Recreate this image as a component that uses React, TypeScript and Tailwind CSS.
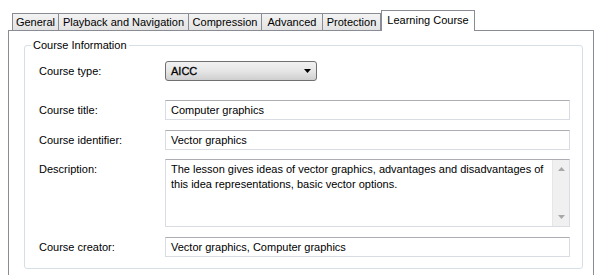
import React from "react";

const tabs = [
  { label: "General", w: "w-[47px]" },
  { label: "Playback and Navigation", w: "w-[131px]" },
  { label: "Compression", w: "w-[74px]" },
  { label: "Advanced", w: "w-[62px]" },
  { label: "Protection", w: "w-[59px]" },
];

function TextField({ value }: { value: string }) {
  return (
    <div className="h-[20px] flex-1 border border-[#dadce3] border-t-[#abadb3] bg-white pl-[5px] leading-[18px] text-black">
      {value}
    </div>
  );
}

function Row({ label, children }: { label: string; children: React.ReactNode }) {
  return (
    <div className="flex items-center">
      <div className="w-[126px] shrink-0">{label}</div>
      {children}
    </div>
  );
}

export default function App() {
  return (
    <div className="w-[605px] h-[275px] overflow-hidden bg-white pt-[10px] font-['Liberation_Sans',Arial,sans-serif] text-[11px] text-black">
      <div className="flex items-end pl-[12px]">
        {tabs.map((t, i) => (
          <div
            key={t.label}
            className={`${t.w} ${i > 0 ? "-ml-px" : ""} h-[17px] border border-b-0 border-[#898c95] bg-gradient-to-b from-[#f3f3f3] to-[#e3e3e3] text-center leading-[16px]`}
          >
            {t.label}
          </div>
        ))}
        <div className="relative z-10 -mb-px h-[21px] w-[94px] border border-b-0 border-[#898c95] bg-white text-center leading-[18px]">
          Learning Course
        </div>
      </div>

      <div className="ml-[8px] h-[260px] w-[586px] border border-b-0 border-[#898c95] bg-white pt-[14px] pl-[15px]">
        <div className="relative w-[559px] rounded-[3px] border border-[#d5dfe5] pt-[15px] pl-[14px] pr-[12px] pb-[11px]">
          <span className="absolute -top-[8px] left-[6px] bg-white px-[2px] leading-[14px]">Course Information</span>

          <Row label="Course type:">
            <div className="relative flex h-[20px] w-[152px] items-center rounded-[3px] border border-[#707070] bg-gradient-to-b from-[#f2f2f2] via-[#e6e6e6] to-[#cfcfcf] pl-[5px] [-webkit-text-stroke:0.3px_#000]">
              AICC
              <svg className="absolute right-[4px] top-[7px]" width="8" height="5" viewBox="0 0 8 5">
                <path d="M0 0h7L3.5 4z" fill="#000" />
              </svg>
            </div>
          </Row>

          <div className="mt-[19px]">
            <Row label="Course title:">
              <TextField value="Computer graphics" />
            </Row>
          </div>

          <div className="mt-[10px]">
            <Row label="Course identifier:">
              <TextField value="Vector graphics" />
            </Row>
          </div>

          <div className="mt-[9px] flex items-start">
            <div className="w-[126px] shrink-0 pt-[3px] leading-[15px]">Description:</div>
            <div className="flex h-[68px] flex-1 border border-[#dadce3] border-t-[#abadb3] bg-white">
              <div className="flex-1 pl-[5px] pt-[2px] leading-[15px]">
                The lesson gives ideas of vector graphics, advantages and disadvantages of
                <br />
                this idea representations, basic vector options.
              </div>
              <div className="flex w-[17px] flex-col items-center justify-between border-l border-[#e6e6e6] bg-[#f0f0f0] pt-[7px] pb-[7px]">
                <svg width="7" height="4" viewBox="0 0 7 4">
                  <path d="M3.5 0L7 4H0z" fill="#a8a8a8" />
                </svg>
                <svg width="7" height="4" viewBox="0 0 7 4">
                  <path d="M0 0h7L3.5 4z" fill="#a8a8a8" />
                </svg>
              </div>
            </div>
          </div>

          <div className="mt-[10px]">
            <Row label="Course creator:">
              <TextField value="Vector graphics, Computer graphics" />
            </Row>
          </div>
        </div>
      </div>
    </div>
  );
}
